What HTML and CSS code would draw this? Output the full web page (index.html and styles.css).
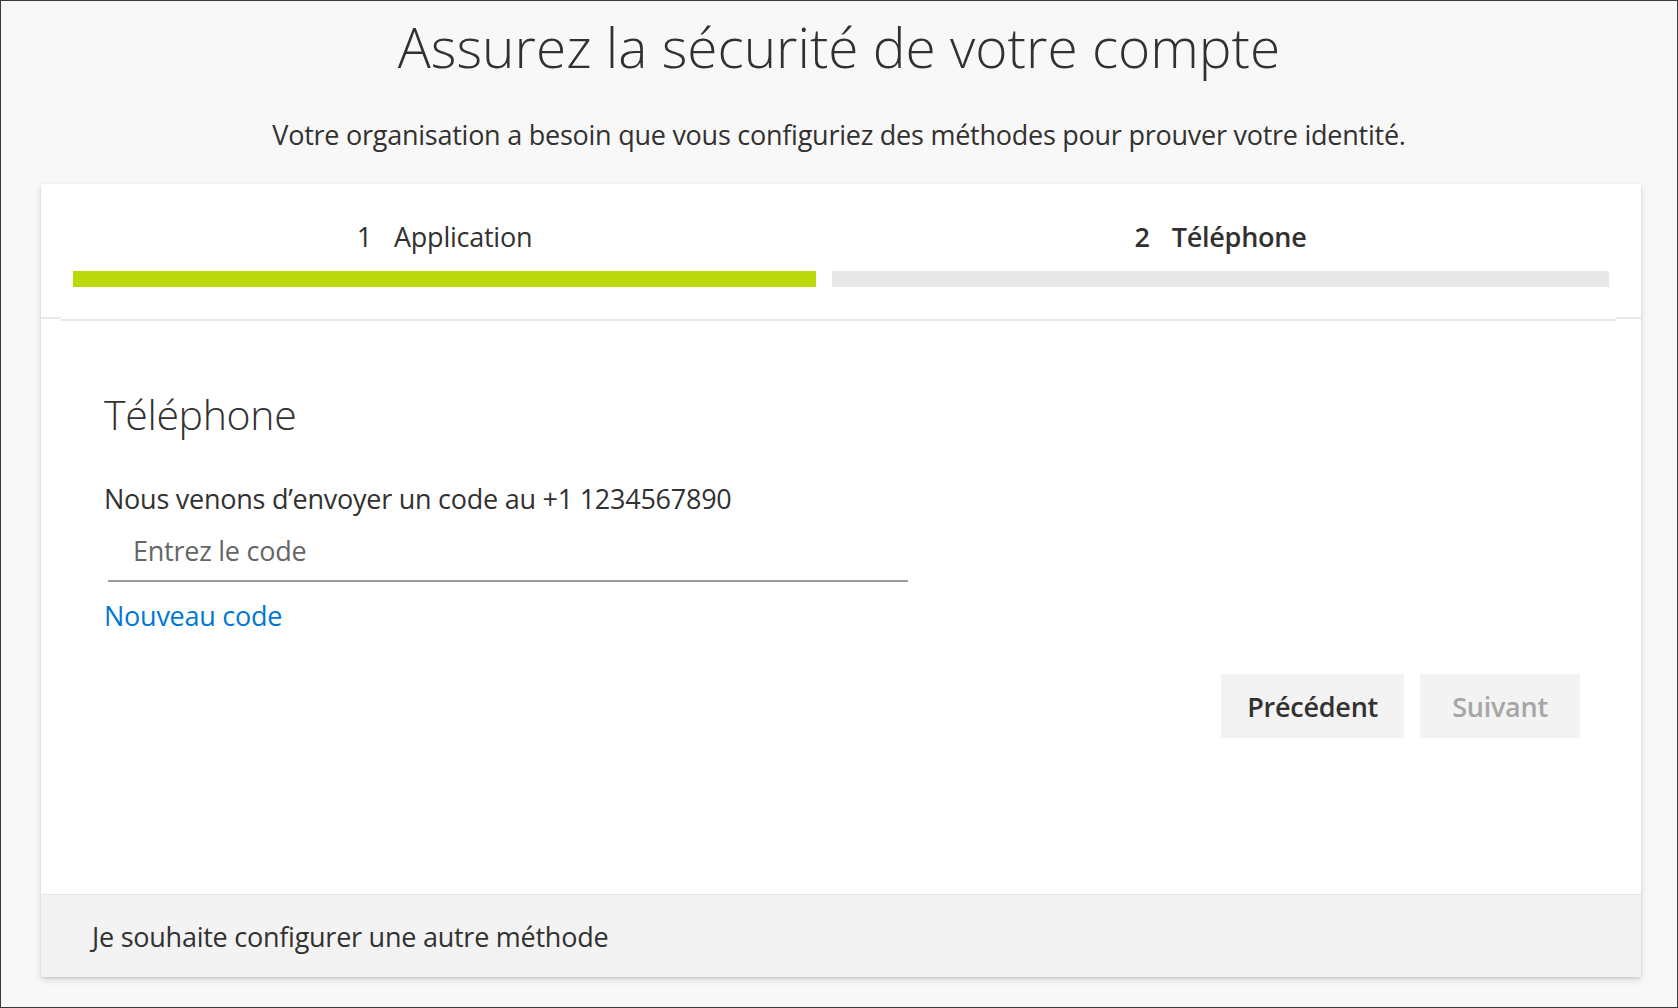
FILE: index.html
```html
<!DOCTYPE html>
<html lang="fr">
<head>
<meta charset="utf-8">
<title>Assurez la sécurité de votre compte</title>
<link rel="stylesheet" href="styles.css">
</head>
<body>
<div class="frame">
  <h1 class="title">Assurez la sécurité de votre compte</h1>
  <p class="subtitle">Votre organisation a besoin que vous configuriez des méthodes pour prouver votre identité.</p>
  <div class="card">
    <div class="steps">
      <div class="step step-done">
        <div class="step-label"><span class="step-num">1</span>Application</div>
        <div class="step-bar"></div>
      </div>
      <div class="step step-current">
        <div class="step-label"><span class="step-num">2</span>Téléphone</div>
        <div class="step-bar"></div>
      </div>
    </div>
    <div class="separator">
      <span class="sep-side sep-left"></span>
      <span class="sep-mid"></span>
      <span class="sep-side sep-right"></span>
    </div>
    <div class="body">
      <h2 class="heading">Téléphone</h2>
      <p class="message">Nous venons d’envoyer un code au +1 1234567890</p>
      <input class="code-input" type="text" placeholder="Entrez le code">
      <a class="link" href="#">Nouveau code</a>
      <div class="actions">
        <button class="btn" type="button">Précédent</button>
        <button class="btn btn-disabled" type="button" disabled>Suivant</button>
      </div>
    </div>
    <div class="footer">Je souhaite configurer une autre méthode</div>
  </div>
</div>
</body>
</html>
```
FILE: styles.css
```css
html, body {
  margin: 0;
  padding: 0;
}
body {
  font-family: "Open Sans", "Noto Sans", "Liberation Sans", sans-serif;
  color: #323130;
}
.frame {
  box-sizing: border-box;
  width: 1678px;
  height: 1008px;
  border: 1px solid #3c3c3c;
  background: #f8f8f8;
  display: flex;
  flex-direction: column;
  align-items: center;
  padding-top: 8px;
}
.title {
  margin: 0;
  font-size: 55px;
  line-height: 76px;
  font-weight: 300;
  color: #323130;
}
.subtitle {
  margin: 32px 0 0;
  font-size: 27px;
  line-height: 36px;
  letter-spacing: -0.25px;
  font-weight: 400;
}
.card {
  margin-top: 31px;
  align-self: flex-start;
  margin-left: 40px;
  width: 1600px;
  height: 793px;
  background: #fff;
  box-shadow: 0 3px 7px rgba(0, 0, 0, 0.13), 0 0.5px 2px rgba(0, 0, 0, 0.11);
  display: flex;
  flex-direction: column;
}
.steps {
  display: grid;
  grid-template-columns: 743fr 777fr;
  column-gap: 16px;
  padding: 35px 32px 0;
}
.step {
  display: flex;
  flex-direction: column;
  align-items: center;
}
.step-label {
  font-size: 27px;
  line-height: 36px;
  letter-spacing: -0.25px;
}
.step-num {
  margin-right: 22px;
}
.step-current .step-label {
  font-weight: 600;
}
.step-bar {
  margin-top: 16px;
  align-self: stretch;
  height: 16px;
  background: #e8e8e8;
}
.step-done .step-bar {
  background: #bad80a;
}
.separator {
  margin-top: 30px;
  display: flex;
  height: 4px;
}
.sep-side {
  display: block;
  height: 2px;
  background: #e8e8e8;
}
.sep-left { width: 20px; }
.sep-right { width: 25px; }
.sep-mid {
  display: block;
  flex: 1;
  height: 2px;
  margin-top: 2px;
  background: #e8e8e8;
}
.body {
  flex: 1;
  display: flex;
  flex-direction: column;
  align-items: flex-start;
  padding: 65px 61px 0 63px;
}
.heading {
  margin: 0;
  font-size: 41px;
  line-height: 56px;
  letter-spacing: -0.3px;
  font-weight: 300;
}
.message {
  margin: 39px 0 0;
  font-size: 27px;
  line-height: 36px;
  letter-spacing: -0.25px;
}
.code-input {
  margin: 3px 0 0 4px;
  box-sizing: border-box;
  width: 800px;
  height: 62px;
  padding: 0 0 0 25px;
  border: none;
  border-bottom: 2px solid #9a9a9a;
  background: transparent;
  font-family: inherit;
  font-size: 27px;
  letter-spacing: -0.25px;
  color: #323130;
  outline: none;
}
.code-input::placeholder {
  color: #666;
  opacity: 1;
}
.link {
  margin-top: 16px;
  font-size: 27px;
  line-height: 36px;
  letter-spacing: -0.25px;
  color: #0078d4;
  text-decoration: none;
}
.actions {
  margin-top: 40px;
  align-self: stretch;
  display: flex;
  justify-content: flex-end;
  gap: 16px;
}
.btn {
  height: 64px;
  min-width: 160px;
  padding: 0 26px;
  border: none;
  background: #f3f3f3;
  font-family: inherit;
  font-size: 27px;
  letter-spacing: -0.25px;
  font-weight: 600;
  color: #323130;
}
.btn-disabled {
  color: #a6a6a6;
}
.footer {
  box-sizing: border-box;
  height: 83px;
  border-top: 1px solid #e6e6e6;
  background: #f3f3f3;
  padding: 24px 51px 0;
  font-size: 27px;
  line-height: 36px;
  letter-spacing: -0.25px;
}
```
